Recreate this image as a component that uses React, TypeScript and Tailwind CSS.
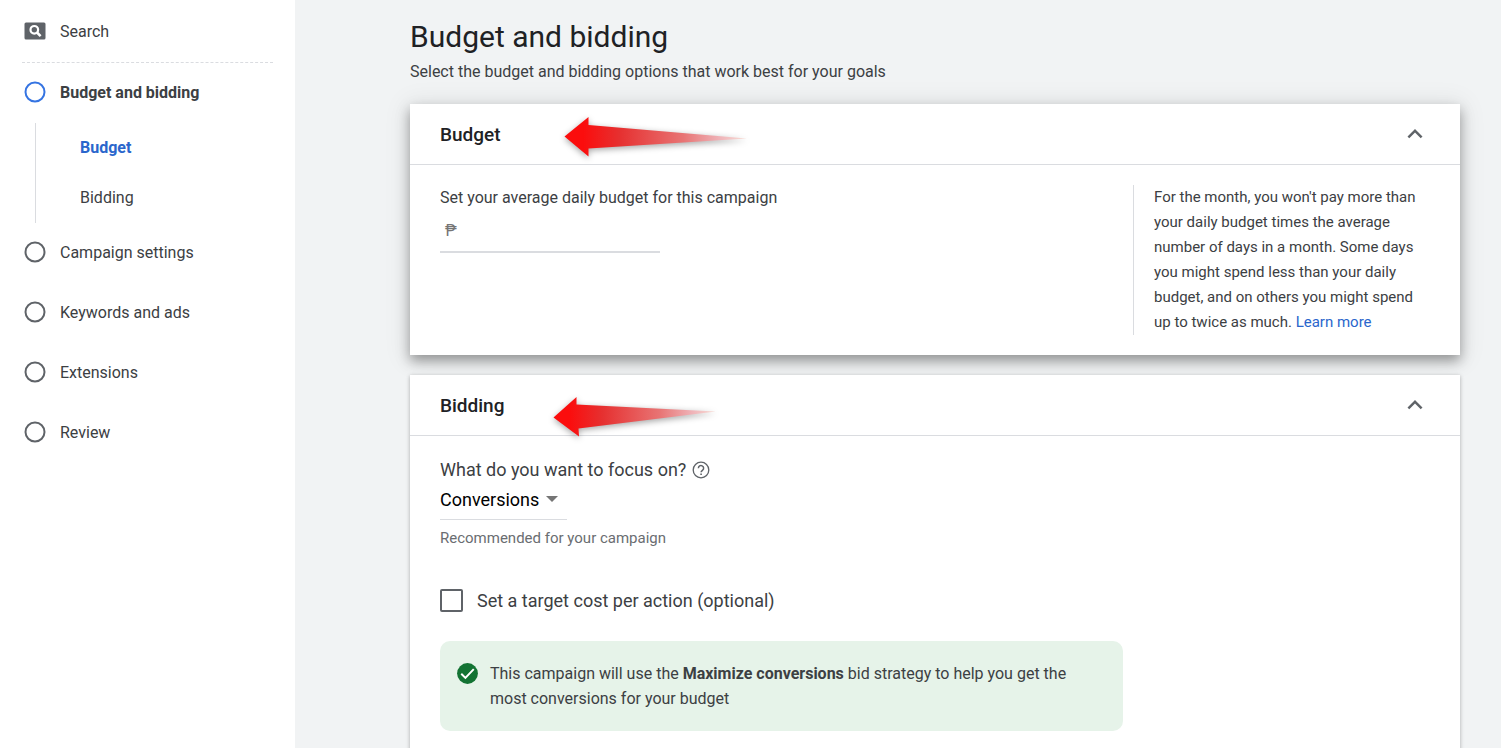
import { useState } from 'react'
import type { ReactNode } from 'react'

interface StepProps {
  label: string
  active?: boolean
}

interface PanelProps {
  title: string
  raised?: boolean
  arrow: ReactNode
  children: ReactNode
}

const NEXT_STEPS = ['Campaign settings', 'Keywords and ads', 'Extensions', 'Review']

function Step({ label, active }: StepProps) {
  return (
    <a href="#" className="flex h-[60px] items-center gap-[14px] pb-[2px] pl-[24px]">
      <svg width="22" height="22" viewBox="0 0 22 22" className="shrink-0">
        <circle cx="11" cy="11" r="9.5" fill="#fff" stroke={active ? '#3574e2' : '#5f6368'} strokeWidth="2" />
      </svg>
      <span className={active ? 'font-bold' : ''}>{label}</span>
    </a>
  )
}

function Sidebar() {
  return (
    <nav className="w-[295px] shrink-0 bg-white text-[16px] leading-[25px]">
      <a href="#" className="mx-[22px] flex h-[63px] items-center gap-[14px] border-b border-dashed border-[#dadce0] pl-[2px]">
        <svg width="22" height="22" viewBox="0 0 22 22" className="shrink-0">
          <rect x="0.5" y="2.5" width="21" height="17" rx="1.5" fill="#5f6368" />
          <circle cx="10.3" cy="9.8" r="3.8" fill="none" stroke="#fff" strokeWidth="2.2" />
          <path d="M13 12.5l3.6 3.6" stroke="#fff" strokeWidth="2.6" />
        </svg>
        <span>Search</span>
      </a>
      <Step label="Budget and bidding" active />
      <div className="ml-[35px] flex flex-col border-l border-[#dadce0] pl-[44px]">
        <a href="#" className="flex h-[50px] items-center pb-[2px] font-bold text-[#2a66cc]">Budget</a>
        <a href="#" className="flex h-[50px] items-center pb-[2px]">Bidding</a>
      </div>
      {NEXT_STEPS.map((label) => (
        <Step key={label} label={label} />
      ))}
    </nav>
  )
}

function Panel({ title, raised, arrow, children }: PanelProps) {
  const [open, setOpen] = useState(true)

  return (
    <section
      className={
        raised
          ? 'relative z-10 bg-white shadow-[0_6px_12px_rgba(0,0,0,0.36),0_2px_24px_4px_rgba(0,0,0,0.07)]'
          : 'relative z-20 flex-1 bg-white shadow-[0_1px_4px_rgba(0,0,0,0.3)]'
      }
    >
      <div className="relative flex h-[61px] items-center justify-between border-b border-[#dadce0] px-[30px]">
        <h2 className="text-[19px] leading-[25px] font-medium text-[#202124]">{title}</h2>
        <button
          type="button"
          aria-label={`Toggle ${title}`}
          aria-expanded={open}
          onClick={() => setOpen(!open)}
          className="flex size-[30px] items-center justify-center"
        >
          <svg width="30" height="30" viewBox="0 0 24 24" fill="#5f6368" className={open ? '' : 'rotate-180'}>
            <path d="M12 8l-6 6 1.41 1.41L12 10.83l4.59 4.58L18 14z" />
          </svg>
        </button>
        {arrow}
      </div>
      {open && children}
    </section>
  )
}

function BudgetArrow() {
  return (
    <svg width="200" height="56" viewBox="0 0 200 56" className="pointer-events-none absolute top-[5px] left-[145px]">
      <defs>
        <linearGradient id="budget-arrow" x1="10" x2="192" y1="0" y2="0" gradientUnits="userSpaceOnUse">
          <stop offset="0.1" stopColor="#fb0d0d" />
          <stop offset="0.3" stopColor="#e63030" />
          <stop offset="0.65" stopColor="#e87474" />
          <stop offset="0.85" stopColor="#efb3b8" />
          <stop offset="1" stopColor="#f8e0d8" />
        </linearGradient>
      </defs>
      <path
        d="M9.5 27.5L33.5 8v8L192 29.5 33.5 39.5v8z"
        fill="url(#budget-arrow)"
        className="drop-shadow-[0_2px_3px_rgba(0,0,0,0.35)]"
      />
    </svg>
  )
}

function BiddingArrow() {
  return (
    <svg width="190" height="60" viewBox="0 0 190 60" className="pointer-events-none absolute top-[10px] left-[135px]">
      <defs>
        <linearGradient id="bidding-arrow" x1="8" x2="172" y1="0" y2="0" gradientUnits="userSpaceOnUse">
          <stop offset="0.1" stopColor="#fb0d0d" />
          <stop offset="0.3" stopColor="#e63030" />
          <stop offset="0.65" stopColor="#e87474" />
          <stop offset="0.85" stopColor="#efb3b8" />
          <stop offset="1" stopColor="#f8e0d8" />
        </linearGradient>
      </defs>
      <path
        d="M8.5 32.5L31.5 12v7.5L171 26.5 33.5 43.5l.5 8z"
        fill="url(#bidding-arrow)"
        className="drop-shadow-[0_2px_3px_rgba(0,0,0,0.35)]"
      />
    </svg>
  )
}

function BudgetPanel() {
  return (
    <Panel title="Budget" raised arrow={<BudgetArrow />}>
      <div className="flex justify-between py-[20px] pr-[25px] pl-[30px]">
        <div className="flex flex-col items-start">
          <label htmlFor="daily-budget" className="text-[16px] leading-[25px]">
            Set your average daily budget for this campaign
          </label>
          <div className="flex h-[43px] w-[220px] items-center border-b-2 border-[#dadce0] pl-[5px] text-[#757575]">
            <span className="text-[16px] leading-[25px]">₱</span>
            <input id="daily-budget" type="text" className="ml-2 min-w-0 flex-1 bg-transparent outline-none" />
          </div>
        </div>
        <aside className="w-[302px] shrink-0 border-l border-[#dadce0] pr-[5px] pl-[20px] text-[15px] leading-[25px]">
          For the month, you won&apos;t pay more than your daily budget times the average number of days in a month.
          Some days you might spend less than your daily budget, and on others you might spend up to twice as much.{' '}
          <a href="#" className="text-[#2a66cc]">Learn more</a>
        </aside>
      </div>
    </Panel>
  )
}

function BiddingPanel() {
  return (
    <Panel title="Bidding" arrow={<BiddingArrow />}>
      <div className="flex flex-col items-start px-[30px] py-[21px]">
        <div className="flex items-center gap-[6px]">
          <label htmlFor="focus" className="text-[18px] leading-[25px]">What do you want to focus on?</label>
          <svg width="18" height="18" viewBox="0 0 18 18" fill="none" stroke="#5f6368" strokeWidth="1.3">
            <circle cx="9" cy="9" r="7.8" />
            <path d="M6.4 7.2a2.6 2.6 0 1 1 4.2 2c-.9.7-1.5 1.1-1.5 2.1" strokeWidth="1.5" />
            <path d="M9.1 12.4V14" strokeWidth="1.6" />
          </svg>
        </div>
        <div className="relative w-[127px]">
          <select
            id="focus"
            className="h-[38px] w-full appearance-none border-b border-[#dadce0] bg-transparent pr-[28px] pb-[3px] text-[18px] text-black outline-none"
          >
            <option>Conversions</option>
          </select>
          <svg width="12" height="6" viewBox="0 0 12 6" className="pointer-events-none absolute top-[14px] right-[9px]">
            <path d="M0 0h12L6 6z" fill="#757575" />
          </svg>
        </div>
        <p className="mt-[6px] text-[15px] leading-[25px] text-[#6a6d71]">Recommended for your campaign</p>
        <label className="mt-[37px] flex items-center gap-[14px] text-[18px] leading-[25px]">
          <input
            type="checkbox"
            className="size-[23px] appearance-none rounded-[2px] border-[2px] border-[#5f6368] bg-white checked:bg-[#5f6368]"
          />
          Set a target cost per action (optional)
        </label>
        <div className="mt-[28px] flex w-[683px] max-w-full gap-[10px] rounded-[10px] bg-[#e6f3e9] py-[20px] pr-[40px] pl-[15px] text-[16px] leading-[25px]">
          <svg width="25" height="25" viewBox="0 0 24 24" className="shrink-0">
            <circle cx="12" cy="12" r="10" fill="#137333" />
            <path d="M6 12.2l4 4 8-8.4" fill="none" stroke="#fff" strokeWidth="1.9" />
          </svg>
          <p>
            This campaign will use the <b className="font-bold">Maximize conversions</b> bid strategy to help you get
            the most conversions for your budget
          </p>
        </div>
      </div>
    </Panel>
  )
}

export default function App() {
  return (
    <div className="flex min-h-screen bg-[#f1f3f4] font-['Roboto',sans-serif] text-[#3c4043]">
      <Sidebar />
      <main className="flex min-w-0 flex-1 flex-col pt-[17px] pr-[41px] pl-[115px]">
        <h1 className="text-[30px] leading-[40px] text-[#202124]">Budget and bidding</h1>
        <p className="mt-[2px] text-[16px] leading-[25px]">
          Select the budget and bidding options that work best for your goals
        </p>
        <div className="mt-[20px] flex flex-1 flex-col gap-[20px]">
          <BudgetPanel />
          <BiddingPanel />
        </div>
      </main>
    </div>
  )
}
